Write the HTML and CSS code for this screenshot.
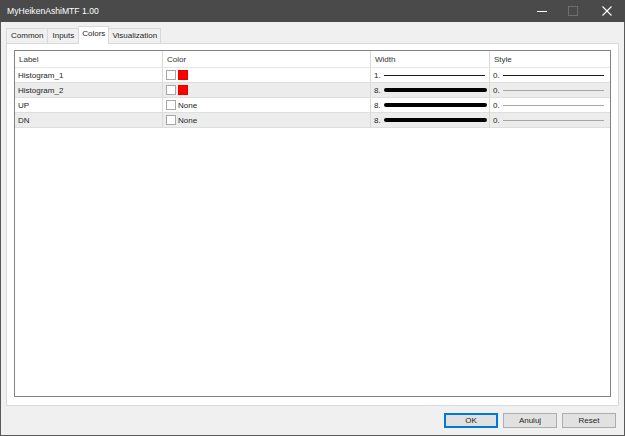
FILE: index.html
```html
<!DOCTYPE html>
<html>
<head>
<meta charset="utf-8">
<title>MyHeikenAshiMTF 1.00</title>
<link rel="stylesheet" href="styles.css">
</head>
<body>
<div class="window">
  <div class="titlebar">
    <span class="title">MyHeikenAshiMTF 1.00</span>
    <div class="controls">
      <span class="ctl min"><svg width="10" height="10" viewBox="0 0 10 10"><path d="M0 5.5H10" stroke="#fff" stroke-width="1"/></svg></span>
      <span class="ctl max"><svg width="10" height="10" viewBox="0 0 10 10"><rect x="0.5" y="0.5" width="9" height="9" fill="none" stroke="#6e6e6e" stroke-width="1"/></svg></span>
      <span class="ctl close"><svg width="10" height="10" viewBox="0 0 10 10"><path d="M0.5 0.5L9.5 9.5M9.5 0.5L0.5 9.5" stroke="#fff" stroke-width="1.1"/></svg></span>
    </div>
  </div>

  <div class="body">
    <div class="tabs">
      <span class="tab">Common</span>
      <span class="tab">Inputs</span>
      <span class="tab active">Colors</span>
      <span class="tab">Visualization</span>
    </div>

    <div class="panel">
      <div class="list">
        <div class="row head">
          <div class="cell">Label</div>
          <div class="cell">Color</div>
          <div class="cell">Width</div>
          <div class="cell">Style</div>
        </div>
        <div class="row">
          <div class="cell">Histogram_1</div>
          <div class="cell"><span class="swatch"></span><span class="swatch red"></span></div>
          <div class="cell"><span class="num">1.</span><span class="line thin"></span></div>
          <div class="cell"><span class="num">0.</span><span class="line thin"></span></div>
        </div>
        <div class="row alt">
          <div class="cell">Histogram_2</div>
          <div class="cell"><span class="swatch"></span><span class="swatch red"></span></div>
          <div class="cell"><span class="num">8.</span><span class="line thick"></span></div>
          <div class="cell"><span class="num">0.</span><span class="line faint"></span></div>
        </div>
        <div class="row">
          <div class="cell">UP</div>
          <div class="cell"><span class="swatch"></span><span class="none">None</span></div>
          <div class="cell"><span class="num">8.</span><span class="line thick"></span></div>
          <div class="cell"><span class="num">0.</span><span class="line faint"></span></div>
        </div>
        <div class="row alt">
          <div class="cell">DN</div>
          <div class="cell"><span class="swatch"></span><span class="none">None</span></div>
          <div class="cell"><span class="num">8.</span><span class="line thick"></span></div>
          <div class="cell"><span class="num">0.</span><span class="line faint"></span></div>
        </div>
      </div>
    </div>

    <div class="buttons">
      <button class="btn default">OK</button>
      <button class="btn">Anuluj</button>
      <button class="btn">Reset</button>
    </div>
  </div>
</div>
</body>
</html>
```

FILE: styles.css
```css
html, body {
  margin: 0;
  padding: 0;
}

body {
  width: 625px;
  height: 436px;
  overflow: hidden;
  font-family: "Liberation Sans", Arial, sans-serif;
  font-size: 8px;
  color: #1e1e1e;
}

.window {
  box-sizing: border-box;
  width: 625px;
  height: 436px;
  display: flex;
  flex-direction: column;
  border: 1px solid #595959;
  border-top: none;
  background: #f0f0f0;
}

/* ---- title bar ---- */
.titlebar {
  height: 22px;
  flex: none;
  background: #4a4a4a;
  display: flex;
  align-items: center;
  justify-content: space-between;
  margin: 0 -1px;
}

.title {
  color: #fff;
  font-size: 8.6px;
  padding-left: 7px;
}

.controls {
  display: flex;
  height: 100%;
}

.ctl {
  display: flex;
  align-items: center;
  justify-content: center;
}

.ctl.min { width: 30px; }
.ctl.max { width: 32px; }
.ctl.close { width: 36px; }

/* ---- dialog body ---- */
.body {
  flex: 1;
  display: flex;
  flex-direction: column;
  padding: 3px 5px 0 5px;
}

.tabs {
  display: flex;
  align-items: flex-end;
  height: 18px;
}

.tab {
  height: 14px;
  line-height: 14px;
  padding: 0 4px;
  border: 1px solid #d9d9d9;
  border-bottom: none;
  margin-right: -1px;
  background: #f0f0f0;
}

.tab.active {
  height: 16px;
  line-height: 14px;
  padding: 0 3px 1px 3px;
  background: #fff;
  position: relative;
  z-index: 1;
  margin-bottom: -1px;
}

.tab:last-child {
  padding: 0 3px;
}

.panel {
  height: 363px;
  box-sizing: border-box;
  background: #fff;
  border: 1px solid #d9d9d9;
  padding: 6px 7px 8px 7px;
}

.list {
  height: 100%;
  box-sizing: border-box;
  border: 1px solid #828282;
  background: #fff;
}

.row {
  display: grid;
  grid-template-columns: 148px 208px 119px 1fr;
  height: 15px;
  box-sizing: border-box;
  border-bottom: 1px solid #dedede;
  align-items: stretch;
}

.row.head {
  height: 17px;
  border-bottom: 1px solid #e6e6e6;
}

.row.alt {
  background: #ececec;
}

.cell {
  display: flex;
  align-items: center;
  padding-left: 3px;
  border-right: 1px solid #dadada;
  white-space: nowrap;
  overflow: hidden;
}

.head .cell {
  padding-left: 4px;
  color: #333;
}

.cell:last-child {
  border-right: none;
}

.swatch {
  width: 8px;
  height: 8px;
  border: 1px solid #a8a8a8;
  background: #fff;
  margin-right: 2px;
  flex: none;
}

.swatch.red {
  background: #ff0000;
  border-color: #e60000;
}

.num {
  width: 10px;
  flex: none;
}

.line {
  display: block;
  width: 101px;
  flex: none;
}

.line.thin {
  height: 1px;
  background: #1a1a1a;
}

.line.thick {
  height: 4px;
  background: #000;
  border-radius: 2px;
  width: 103px;
}

.line.faint {
  height: 1px;
  background: #a6a6a6;
}

/* ---- button row ---- */
.buttons {
  display: flex;
  justify-content: flex-end;
  gap: 5px;
  padding-top: 7px;
  padding-right: 3px;
}

.btn {
  width: 54px;
  height: 15px;
  box-sizing: border-box;
  padding: 0;
  font-family: "Liberation Sans", Arial, sans-serif;
  font-size: 8px;
  color: #1e1e1e;
  background: #e1e1e1;
  border: 1px solid #adadad;
}

.btn.default {
  border-color: #0078d7;
  box-shadow: inset 0 0 0 1px #0078d7;
}
```
